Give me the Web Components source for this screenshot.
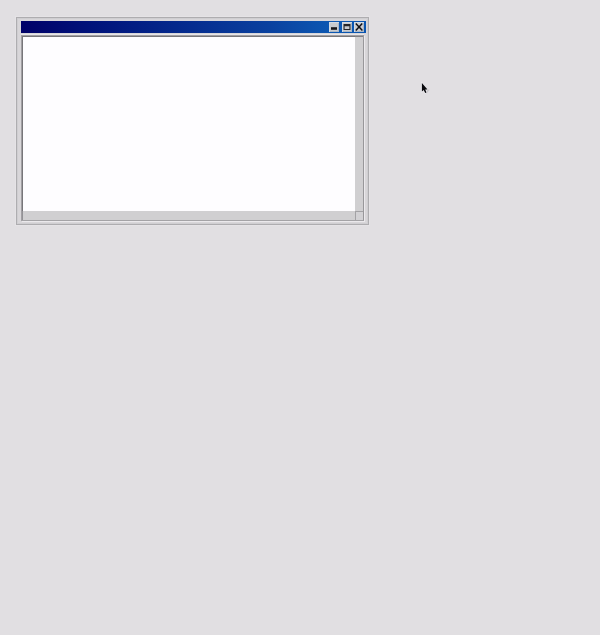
<!DOCTYPE html>
<html lang="en">
<head>
<meta charset="utf-8">
<title>Window</title>
<style>
html, body { margin: 0; height: 100%; background: #e1dfe2; overflow: hidden; }
body { box-sizing: border-box; padding: 17px 0 0 16px; font-family: "Liberation Sans", sans-serif; }
</style>
</head>
<body>
<classic-window>
  <title-bar slot="title">
    <caption-button kind="minimize"></caption-button>
    <caption-button kind="maximize"></caption-button>
    <caption-button kind="close"></caption-button>
  </title-bar>
  <scroll-pane></scroll-pane>
</classic-window>
<mouse-pointer></mouse-pointer>
<script>
const define = (name, html) => customElements.define(name, class extends HTMLElement {
  constructor() {
    super();
    this.attachShadow({ mode: 'open' }).innerHTML = html;
  }
});

define('classic-window', `
<style>
:host { display: flex; flex-direction: column; gap: 2px; box-sizing: border-box; width: 353px; height: 208px;
  padding: 3px 2px 3px 4px; border: 1px solid #aeadb0; background: #d8d6d9;
  box-shadow: inset 1px 1px #cfced1, inset -1px -1px #cfced1, 0 0 0 1px #e5e3e6; }
</style><slot name="title"></slot><slot></slot>`);

define('title-bar', `
<style>
:host { display: flex; justify-content: flex-end; gap: 2.5px; box-sizing: border-box; height: 12px;
  padding: 1px 2px 1px 0; background: linear-gradient(90deg, #000068 0%, #00127a 20%, #04288c 45%, #0a419f 72%, #0d58b3 90%, #0a55b0 100%); }
</style><slot></slot>`);

const glyphs = {
  minimize: '<path d="M2 5.2h6v2.6H2z" fill="#16161a"/>',
  maximize: '<path d="M1.5 2h7v6H1.5zM2.6 4.2v2.8h4.8V4.2z" fill="#242428" fill-rule="evenodd"/>',
  close: '<path d="M1.8 1.6 8.4 8.4M8.2 1.6 1.8 8.4" stroke="#111115" stroke-width="1.5" fill="none"/>'
};
customElements.define('caption-button', class extends HTMLElement {
  connectedCallback() {
    if (this.shadowRoot) return;
    this.attachShadow({ mode: 'open' }).innerHTML = `
<style>
:host { display: block; width: 10px; height: 10px; background: #c9cbcf;
  box-shadow: inset 1px 1px #d3dbe4, inset -1px -1px #aab7c6; }
svg { display: block; }
</style><svg width="10" height="10" viewBox="0 0 10 10">${glyphs[this.getAttribute('kind')]}</svg>`;
  }
});

define('scroll-pane', `
<style>
:host { display: grid; grid-template: 1fr 9px / 1fr 8px; box-sizing: border-box; flex: 1; margin-right: 2px;
  border: 1px solid #a19fa3; border-right-color: #98979a; border-bottom-color: #a4a3a6;
  box-shadow: 1px 1px #ebe9ec, 0 -1px #e7e5e8; background: #d0cfd1; }
.view { background: #fefdff; border: solid #77767a; border-width: 1px 0 0 1px; }
.vertical { border-top: 1px solid #828185; }
.horizontal { border-left: 1px solid #929195; }
.grip { border: solid #a3a2a5; border-width: 1px 0 0 1px; background: #d2d1d4; }
</style>
<div class="view"></div><div class="vertical"></div><div class="horizontal"></div><div class="grip"></div>`);

define('mouse-pointer', `
<style>
:host { position: absolute; left: 420px; top: 81px; width: 11px; height: 15px; }
svg { display: block; }
</style>
<svg width="11" height="15" viewBox="0 0 11 15">
<path d="M2.5 3.2 8.4 9 6.1 11.9" stroke="#aaa9ad" stroke-opacity=".45" stroke-width="1.6" fill="none"/>
<path d="M1.9 2v8.6l1.8-1.5 1.5 3 1.3-.6-1.3-3h2.3z" fill="#08080c" stroke="#eceaee" stroke-width="1.2" paint-order="stroke"/>
</svg>`);
</script>
</body>
</html>
